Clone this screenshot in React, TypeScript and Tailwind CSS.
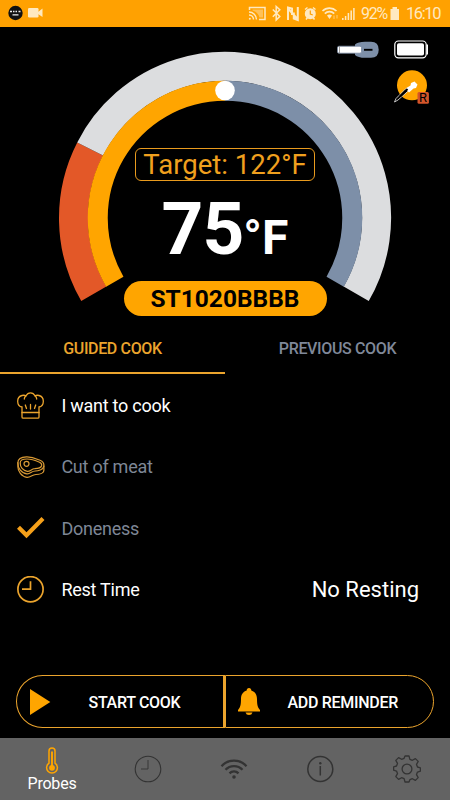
import type { ReactNode } from "react";

const AMBER = "#ffa500";

function StatusBar() {
  return (
    <header className="flex h-[27px] shrink-0 items-center bg-[#ffa101] text-[#ffe9c0]">
      <svg width="60" height="27" viewBox="0 0 60 27">
        <circle cx="15.5" cy="13" r="7.2" fill="#111" />
        <path d="M10 11.5h2M13 11.5h1.5M15.5 11.5h1.5M18.5 11.5h2M12.5 14.8h6" stroke="#eee" strokeWidth="1.3" />
        <rect x="28" y="8" width="10.5" height="9.5" rx="1.2" fill="currentColor" />
        <path d="M38 12l4.5-3.5v8.500L38 14z" fill="currentColor" />
      </svg>
      <svg className="ml-auto" width="112" height="27" viewBox="245 0 112 27" fill="none" stroke="currentColor">
        <path d="M250.500 10V7.500h15.500v12h-6" strokeWidth="1.500" />
        <path d="M250 12a7.500 7.500 0 0 1 7.500 7.500M250 15a4.500 4.500 0 0 1 4.500 4.500" strokeWidth="1.400" />
        <path d="M253.500 9.500h10.500v8h-3.500a11 11 0 0 0-7-7z" fill="currentColor" fillOpacity=".45" stroke="none" />
        <circle cx="250.800" cy="18.700" r="1" fill="currentColor" stroke="none" />
        <path d="M273.800 9.500l7 7-3.600 3.400V6.500l3.600 3.200-7 7" strokeWidth="1.500" />
        <path d="M289 20V7.500l4 1v6.500M298.800 7v13l-4-1.500v-6M289 8.500l9.500 10.500" strokeWidth="2" />
        <circle cx="311.300" cy="13.700" r="5.500" fill="currentColor" stroke="none" />
        <path d="M306 9.500l2.500-2M316.500 9.500l-2.500-2M307 19.500l1.500-2M315.500 19.500l-1.500-2" strokeWidth="1.500" />
        <path d="M311.300 10.500v3.500l2.500 1" stroke="#ffa101" strokeWidth="1.200" />
        <path d="M323.500 11a10 10 0 0 1 14 0M325.800 13.600a6.700 6.700 0 0 1 9.400 0" strokeWidth="1.700" />
        <path d="M328 15.500a4 4 0 0 1 5 0l-2.500 3.500z" fill="currentColor" stroke="none" />
        <path d="M335 15.500v3.500M338 15v3.500" strokeWidth="1" opacity=".6" />
        <path d="M343.800 20v-2M346.600 20v-4M349.400 20v-7M352.200 20v-9.500M354.900 20V8" strokeWidth="1.500" />
      </svg>
      <span className="ml-[5px] w-[27px] whitespace-nowrap pt-px text-[16px] leading-none tracking-[-1.200px]">92%</span>
      <svg width="18" height="27" viewBox="389 0 18 27" fill="currentColor">
        <path d="M391.500 9h2V7h4.500v2h2v11h-8.500z" />
      </svg>
      <span className="mr-[9px] w-[35px] whitespace-nowrap pt-px text-[16.500px] leading-none tracking-[-1.400px]">16:10</span>
    </header>
  );
}

function GaugeDial() {
  return (
    <svg className="col-start-1 row-start-1" width="450" height="298" viewBox="0 27 450 298" fill="none">
      <g strokeWidth="29">
        <path d="M93.800 293.750A151.500 151.500 0 0 1 90.140 148.990" stroke="#e35828" />
        <path d="M90.140 148.990A151.500 151.500 0 1 1 356.200 293.750" stroke="#dcdddf" />
      </g>
      <g strokeWidth="20">
        <path d="M114.790 281.630A127.250 127.250 0 0 1 225 90.750" stroke={AMBER} />
        <path d="M225 90.750A127.250 127.250 0 0 1 335.210 281.630" stroke="#7d8fa8" />
      </g>
      <circle cx="225" cy="90.500" r="9.800" fill="#fff" />

      <path d="M355 44.500q3-2.800 10-2.800h6q7.700 0 7.700 8t-7.700 8h-6q-7 0-10-2.800z" fill="#7d8fa8" />
      <rect x="337.500" y="46.200" width="24" height="7" rx="1.500" fill="#fff" stroke="#76879f" strokeWidth=".8" />
      <path d="M339.500 46.500v6.500" stroke="#777" strokeWidth=".7" />
      <path d="M364 49.800h8.500" stroke="#000" strokeWidth="1.900" />

      <rect x="394.800" y="41" width="31.400" height="16.800" rx="3.600" stroke="#fff" strokeWidth="1.200" />
      <rect x="397" y="43.200" width="27" height="12.400" rx="1.800" fill="#fff" />
      <path d="M427.300 44.500v10" stroke="#fff" strokeWidth="1.400" />

      <circle cx="412" cy="85.300" r="15" fill={AMBER} />
      <path d="M394.500 102l1.500-3.500 9.500-9.500 2.300 2.300-9.800 8.700z" fill="#000" stroke="#eee" strokeWidth=".8" />
      <path d="M405.500 88.500l5-3 .5-2.500 3.500-1.500 3 3-1.500 3.500-2.500.5-4.500 4z" fill="#fff" />
      <path d="M400 96.500l7.500-7.500" stroke="#000" strokeWidth="2" />
      <rect x="417.500" y="92" width="11.400" height="11.800" rx="1.500" fill="#d4552a" />
    </svg>
  );
}

function Gauge() {
  return (
    <section className="grid h-[298px] shrink-0 grid-cols-[450px]">
      <GaugeDial />
      <div className="z-10 col-start-1 row-start-1 flex flex-col items-center pt-[121px]">
        <div className="flex h-[33px] w-[180px] items-center justify-center whitespace-nowrap rounded-md border border-[#e99b1e] text-[27.500px] leading-none text-[#f0a01e]">
          Target: 122°F
        </div>
        <div className="flex h-[73px] w-[450px] items-baseline justify-center whitespace-nowrap pt-[12px] font-bold leading-none text-white">
          <span className="text-[73px] leading-[73px] tracking-[-1px]">75</span>
          <span className="text-[48px] leading-[48px]">°F</span>
        </div>
        <div className="mt-[27px] flex h-[35px] w-[203px] items-center justify-center rounded-full bg-[#ffa500] pt-px text-[24.500px] font-bold leading-none text-black">
          ST1020BBBB
        </div>
      </div>
      <span className="z-10 col-start-1 row-start-1 ml-[419px] mt-[65px] text-[13px] leading-[12px] text-black">R</span>
    </section>
  );
}

function Tabs() {
  return (
    <nav className="grid h-[50px] shrink-0 grid-cols-2 text-center text-[16px] font-medium leading-[47px] tracking-[-0.350px]">
      <button className="h-[49px] border-b-2 border-[#eba42d] text-[#eba42d]">GUIDED COOK</button>
      <button className="h-[49px] border-b-2 border-transparent text-[#7f8899]">PREVIOUS COOK</button>
    </nav>
  );
}

function ChefHatIcon() {
  return (
    <svg width="28" height="28" viewBox="0 0 28 28" fill="none" stroke="#eba42d" strokeWidth="1.300" strokeLinecap="round">
      <path d="M5 20.500V15C-.5 14-1 5 5 3.500c1.500-.4 3-.2 4 .3 2-4 7-4 9 0 1-.5 2.500-.7 4-.3 6 1.500 5.500 10.500 0 11.500v5.500z" />
      <path d="M5 20.500v4.500q0 1.200 1.200 1.200h14.600q1.200 0 1.200-1.200v-4.500M8.800 4q-1.500 1.200-1.500 3M18.200 4q1.500 1.200 1.500 3M8.300 13l1.200 3.500M13.500 12.500v4.500M18.700 13l-1.200 3.500" />
    </svg>
  );
}

function SteakIcon() {
  return (
    <svg width="28" height="28" viewBox="0 0 28 28" fill="none" stroke="#d99a35" strokeWidth="1.200" strokeLinecap="round">
      <path d="M.9 9.500C.9 5.500 4 4 9.500 3.800c6-.2 10 2 13.500 3.500 3 1.300 4.300 3.500 3.800 6-.5 3.500-6 4.700-8.500 4.700-4 0-5 3.300-8.500 2.800C4 20 .7 15 .9 9.500z" />
      <path d="M3.200 9.800C3.200 7.300 6 6 10 6c5 0 9 1.700 12.500 3.200 2 1 2.500 2 2.100 3.500-.7 2-4.100 2.900-6.800 3-3.500 0-4.500 3-7.500 2.600C6 17.700 3 14.100 3.200 9.800z" />
      <path d="M.9 9.500v4.500c0 4 3.500 9.800 9 10.300 3.500.3 5-2.500 9-2.800 3 0 8-1 8-4.500v-4" />
      <circle cx="9.500" cy="10.800" r="2.500" />
    </svg>
  );
}

function CheckIcon() {
  return (
    <svg width="28" height="28" viewBox="0 0 28 28" fill="none" stroke="#f5a01a" strokeWidth="4.200">
      <path d="M1.500 13.200l8 8L26 4.500" />
    </svg>
  );
}

function RestClockIcon() {
  return (
    <svg width="28" height="28" viewBox="0 0 28 28" fill="none" stroke="#eba42d" strokeWidth="1.700">
      <circle cx="13.500" cy="13.200" r="12.600" />
      <path d="M13.500 5.200v8H5" />
    </svg>
  );
}

function Row({ icon, label, muted, value }: { icon: ReactNode; label: string; muted?: boolean; value?: string }) {
  return (
    <div className="flex h-[61.300px] items-center pl-[17px] pr-[31px]">
      {icon}
      <span className={muted ? "ml-[16.400px] text-[18px] tracking-[-0.250px] text-[#7e8796]" : "ml-[16.400px] text-[18px] tracking-[-0.250px] text-white"}>{label}</span>
      {value && <span className="ml-auto text-[22px] text-white">{value}</span>}
    </div>
  );
}

function Actions() {
  return (
    <div className="mx-4 mt-[55px] grid h-[53px] shrink-0 grid-cols-[209px_209px] text-[16px] font-medium tracking-[-0.300px] text-white">
      <button className="flex items-center rounded-l-full border border-r-2 border-[#eba42d] pl-[12px] pt-px">
        <svg width="22" height="28" viewBox="0 0 22 28" fill={AMBER}>
          <path d="M1 1l20.300 13L1 27z" />
        </svg>
        <span className="ml-[37.500px] whitespace-nowrap pt-px">START COOK</span>
      </button>
      <button className="flex items-center rounded-r-full border border-[#eba42d] pl-[11px] pt-px">
        <svg width="24" height="28" viewBox="0 0 24 28" fill={AMBER}>
          <path d="M12 0c1.500 0 2.300 1 2.300 2.500 4 1.300 5.700 4.300 5.700 8.500 0 6 .7 8.500 3 11v1.500H1V22c2.300-2.500 3-5 3-11 0-4.200 1.700-7.200 5.700-8.500C9.700 1 10.500 0 12 0z" />
          <path d="M8.500 24.500h7q-.7 2.500-3.500 2.500t-3.500-2.500z" />
        </svg>
        <span className="ml-[26.500px] whitespace-nowrap pt-px">ADD REMINDER</span>
      </button>
    </div>
  );
}

function BottomNav() {
  return (
    <nav className="mt-auto flex h-[62px] shrink-0 bg-[#636363] text-[#333]">
      <button className="flex w-[104px] flex-col items-center pt-[9px]">
        <svg width="14" height="27" viewBox="0 0 14 27" fill="none" stroke={AMBER}>
          <path d="M4 16.200V4a3 3 0 0 1 6 0v12.200a5.400 5.400 0 1 1-6 0z" strokeWidth="1.500" />
          <path d="M7 4.500V20" strokeWidth="1.900" />
          <circle cx="7" cy="20.800" r="2.900" fill={AMBER} stroke="none" />
        </svg>
        <span className="pt-px text-[16px] leading-[18px] tracking-[-0.200px] text-white">Probes</span>
      </button>
      <button className="flex w-[88px] items-center justify-center">
        <svg width="28" height="28" viewBox="0 0 28 28" fill="none" stroke="currentColor">
          <circle cx="14" cy="14" r="12.800" strokeWidth="1.100" />
          <path d="M14 5v9H7" strokeWidth=".9" />
        </svg>
      </button>
      <button className="flex w-[84px] items-center justify-center">
        <svg width="28" height="28" viewBox="0 0 28 28" fill="none" stroke="currentColor" strokeWidth="2.300">
          <path d="M1.500 11.200a17 17 0 0 1 25 0M5.500 14.800a11.500 11.500 0 0 1 17 0M9.500 18.400a6.200 6.200 0 0 1 9 0" />
          <circle cx="14" cy="22" r="1.800" fill="currentColor" stroke="none" />
        </svg>
      </button>
      <button className="flex w-[88px] items-center justify-center">
        <svg width="28" height="28" viewBox="0 0 28 28" fill="none" stroke="currentColor">
          <circle cx="14.300" cy="14" r="12.500" strokeWidth="1.500" />
          <path d="M14.300 11v9.500" strokeWidth="1.500" />
          <circle cx="14.300" cy="8.300" r="1.200" fill="currentColor" stroke="none" />
        </svg>
      </button>
      <button className="flex w-[85px] items-center justify-center">
        <svg width="28" height="28" viewBox="0 0 28 28" fill="none" stroke="currentColor" strokeWidth="1.300" strokeLinejoin="round">
          <path d="M12 1h4l.9 3.300 2.500 1 3-1.700 2.800 2.800-1.700 3 1 2.600 2.900.8v3.400l-2.900.9-1 2.500 1.700 3-2.800 2.800-3-1.700-2.500 1L16 27h-4l-.9-3.300-2.500-1-3 1.700-2.800-2.800 1.700-3-1-2.500-2.900-.9v-3.400l2.900-.8 1-2.600-1.700-3 2.800-2.800 3 1.700 2.500-1z" />
          <circle cx="14" cy="14" r="4.900" />
        </svg>
      </button>
    </nav>
  );
}

export default function App() {
  return (
    <main className="flex h-[800px] w-[450px] flex-col overflow-hidden bg-black font-[Roboto,'Liberation_Sans',sans-serif]">
      <StatusBar />
      <Gauge />
      <Tabs />
      <section className="flex shrink-0 flex-col">
        <Row icon={<ChefHatIcon />} label="I want to cook" />
        <Row icon={<SteakIcon />} label="Cut of meat" muted />
        <Row icon={<CheckIcon />} label="Doneness" muted />
        <Row icon={<RestClockIcon />} label="Rest Time" value="No Resting" />
      </section>
      <Actions />
      <BottomNav />
    </main>
  );
}
